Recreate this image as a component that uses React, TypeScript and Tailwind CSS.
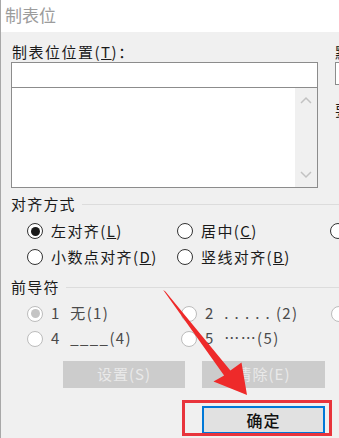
import React from "react";

const cjk = { fontFamily: '"Noto Sans CJK SC", "Microsoft YaHei", sans-serif' };

function Radio({ checked = false, disabled = false }: { checked?: boolean; disabled?: boolean }) {
  return (
    <span
      className={`w-[16px] h-[16px] shrink-0 rounded-full border flex items-center justify-center ${
        disabled ? "border-[#bcbcbc] bg-white" : "border-[#333333] bg-white"
      }`}
    >
      {checked && (
        <span className={`w-[9px] h-[9px] rounded-full ${disabled ? "bg-[#c4c4c4]" : "bg-[#1a1a1a]"}`} />
      )}
    </span>
  );
}

function Option({
  label,
  checked,
  disabled,
}: {
  label: React.ReactNode;
  checked?: boolean;
  disabled?: boolean;
}) {
  return (
    <div className="flex items-center gap-[8px] whitespace-nowrap">
      <Radio checked={checked} disabled={disabled} />
      <span className={`tracking-[1.4px] ${disabled ? "text-[#4a4a4a]" : "text-[#1a1a1a]"}`}>{label}</span>
    </div>
  );
}

function GroupHeader({ title }: { title: string }) {
  return (
    <div className="flex items-center gap-[6px] h-[18px]">
      <span className="text-[15px] leading-[18px] tracking-[1.2px] text-[#1a1a1a]">{title}</span>
      <div className="flex-1 h-px bg-[#dcdcdc]" />
    </div>
  );
}

export default function App() {
  return (
    <div
      className="relative w-[339px] h-[438px] overflow-hidden bg-[#f0f0f0] flex flex-col text-[15px]"
      style={cjk}
    >
      {/* Title bar */}
      <div className="h-[32px] bg-white flex items-center pl-[4px] pb-[2px] border-l border-[#a8a8a8]">
        <span className="text-[17px] text-[#9c9c9c]">制表位</span>
      </div>

      <div className="flex-1 flex flex-col pl-[10px] border-l border-[#a8a8a8]">
        {/* Top area */}
        <div className="flex gap-[17px]">
          <div className="w-[307px] shrink-0 flex flex-col">
            <div className="h-[30px] flex items-end pb-[1px] pl-[1px]">
              <span className="leading-[18px] tracking-[1.5px] text-[#1a1a1a]">
                制表位位置(<u>T</u>)：
              </span>
            </div>
            <div className="h-[26px] bg-white border border-[#8c8c8c]" />
            <div className="h-[100px] bg-white border border-t-0 border-[#8c8c8c] flex">
              <div className="flex-1" />
              <div className="w-[22px] bg-[#f0f0f0] flex flex-col items-center justify-between py-[8px]">
                <svg width="12" height="8" viewBox="0 0 12 8">
                  <path d="M1 7 L6 2 L11 7" fill="none" stroke="#c2c2c2" strokeWidth="1.5" />
                </svg>
                <svg width="12" height="8" viewBox="0 0 12 8">
                  <path d="M1 1 L6 6 L11 1" fill="none" stroke="#c2c2c2" strokeWidth="1.5" />
                </svg>
              </div>
            </div>
          </div>
          <div className="flex flex-col whitespace-nowrap">
            <div className="h-[30px] flex items-end pb-[1px]">
              <span className="leading-[18px] text-[#1a1a1a]">默认制表位(F)：</span>
            </div>
            <div className="h-[23px] w-[60px] bg-white border border-[#8c8c8c]" />
            <div className="mt-[16px] leading-[18px] text-[#1a1a1a]">要清除的制表位：</div>
          </div>
        </div>

        {/* Alignment */}
        <div className="mt-[7px]">
          <GroupHeader title="对齐方式" />
        </div>
        <div className="mt-[5px] grid grid-cols-[150px_153px_60px] pl-[16px]">
          <div className="h-[26px] flex items-center">
            <Option checked label={<>左对齐(<u>L</u>)</>} />
          </div>
          <div className="h-[26px] flex items-center">
            <Option label={<>居中(<u>C</u>)</>} />
          </div>
          <div className="h-[26px] flex items-center">
            <Option label={<>右对齐(<u>R</u>)</>} />
          </div>
          <div className="h-[26px] flex items-center">
            <Option label={<>小数点对齐(<u>D</u>)</>} />
          </div>
          <div className="h-[26px] flex items-center">
            <Option label={<>竖线对齐(<u>B</u>)</>} />
          </div>
          <div />
        </div>

        {/* Leader */}
        <div className="mt-[8px]">
          <GroupHeader title="前导符" />
        </div>
        <div className="mt-[5px] grid grid-cols-[154px_150px_60px] pl-[16px]">
          <div className="h-[25px] flex items-center">
            <Option checked disabled label={<span>1&nbsp;&nbsp;无(1)</span>} />
          </div>
          <div className="h-[25px] flex items-center">
            <Option disabled label={<span>2&nbsp;&nbsp;.&nbsp;.&nbsp;.&nbsp;.&nbsp;.&nbsp;(2)</span>} />
          </div>
          <div className="h-[25px] flex items-center">
            <Option disabled label={<span>3&nbsp;------(3)</span>} />
          </div>
          <div className="h-[25px] flex items-center">
            <Option disabled label={<span>4&nbsp;&nbsp;____(4)</span>} />
          </div>
          <div className="h-[25px] flex items-center">
            <Option disabled label={<span>5&nbsp;&nbsp;……(5)</span>} />
          </div>
          <div />
        </div>

        {/* Set / clear */}
        <div className="mt-[10px] flex gap-[17px] pl-[52px]">
          <div className="w-[122px] h-[27px] bg-[#cccccc] flex items-center justify-center tracking-[1px] text-[#e9e9e9]">
            设置(S)
          </div>
          <div className="w-[123px] h-[27px] bg-[#cccccc] flex items-center justify-center tracking-[1px] text-[#e9e9e9]">
            清除(E)
          </div>
        </div>

        {/* OK */}
        <div className="mt-[18px] pl-[191px]">
          <div className="w-[123px] h-[28px] bg-[#e1e1e1] border-2 border-[#0078d7] flex items-center justify-center text-[16px] font-medium tracking-[1px] text-[#111111]">
            确定
          </div>
        </div>
      </div>

      {/* Annotation: red box */}
      <div className="absolute left-[182px] top-[400px] w-[150px] h-[36px] border-[3px] border-[#e8343c] pointer-events-none" />

      {/* Annotation: red arrow */}
      <svg className="absolute left-0 top-0 pointer-events-none" width="339" height="438" viewBox="0 0 339 438">
        <polygon
          points="163.2,290 165.4,291.6 230.4,370.5 241.5,362.5 247,395 213.5,381.5 224.1,375.4"
          fill="#ee2a2a"
        />
      </svg>
    </div>
  );
}
